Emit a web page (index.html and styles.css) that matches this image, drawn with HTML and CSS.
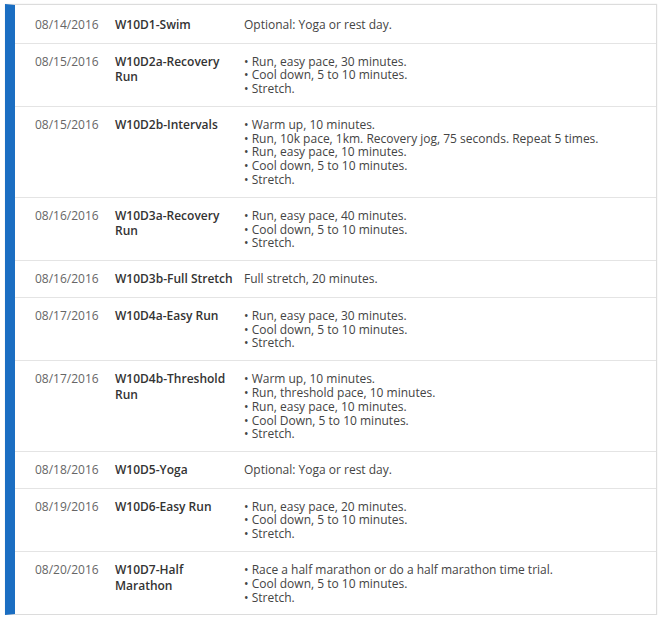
FILE: index.html
```html
<!DOCTYPE html>
<html>
<head>
<meta charset="utf-8">
<link rel="stylesheet" href="styles.css">
</head>
<body>
<div class="schedule">
  <div class="row">
    <div class="date">08/14/2016</div>
    <div class="name">W10D1-Swim</div>
    <div class="desc">Optional: Yoga or rest day.</div>
  </div>
  <div class="row">
    <div class="date">08/15/2016</div>
    <div class="name">W10D2a-Recovery Run</div>
    <div class="desc"><div>• Run, easy pace, 30 minutes.</div><div>• Cool down, 5 to 10 minutes.</div><div>• Stretch.</div></div>
  </div>
  <div class="row">
    <div class="date">08/15/2016</div>
    <div class="name">W10D2b-Intervals</div>
    <div class="desc"><div>• Warm up, 10 minutes.</div><div>• Run, 10k pace, 1km. Recovery jog, 75 seconds. Repeat 5 times.</div><div>• Run, easy pace, 10 minutes.</div><div>• Cool down, 5 to 10 minutes.</div><div>• Stretch.</div></div>
  </div>
  <div class="row">
    <div class="date">08/16/2016</div>
    <div class="name">W10D3a-Recovery Run</div>
    <div class="desc"><div>• Run, easy pace, 40 minutes.</div><div>• Cool down, 5 to 10 minutes.</div><div>• Stretch.</div></div>
  </div>
  <div class="row">
    <div class="date">08/16/2016</div>
    <div class="name nowrap">W10D3b-Full Stretch</div>
    <div class="desc">Full stretch, 20 minutes.</div>
  </div>
  <div class="row">
    <div class="date">08/17/2016</div>
    <div class="name">W10D4a-Easy Run</div>
    <div class="desc"><div>• Run, easy pace, 30 minutes.</div><div>• Cool down, 5 to 10 minutes.</div><div>• Stretch.</div></div>
  </div>
  <div class="row">
    <div class="date">08/17/2016</div>
    <div class="name">W10D4b-Threshold Run</div>
    <div class="desc"><div>• Warm up, 10 minutes.</div><div>• Run, threshold pace, 10 minutes.</div><div>• Run, easy pace, 10 minutes.</div><div>• Cool Down, 5 to 10 minutes.</div><div>• Stretch.</div></div>
  </div>
  <div class="row">
    <div class="date">08/18/2016</div>
    <div class="name">W10D5-Yoga</div>
    <div class="desc">Optional: Yoga or rest day.</div>
  </div>
  <div class="row">
    <div class="date">08/19/2016</div>
    <div class="name">W10D6-Easy Run</div>
    <div class="desc"><div>• Run, easy pace, 20 minutes.</div><div>• Cool down, 5 to 10 minutes.</div><div>• Stretch.</div></div>
  </div>
  <div class="row">
    <div class="date">08/20/2016</div>
    <div class="name">W10D7-Half Marathon</div>
    <div class="desc"><div>• Race a half marathon or do a half marathon time trial.</div><div>• Cool down, 5 to 10 minutes.</div><div>• Stretch.</div></div>
  </div>
</div>
</body>
</html>
```
FILE: styles.css
```css
html, body {
  margin: 0;
  padding: 0;
  background: #ffffff;
}
body {
  padding: 4px 6px 0 5px;
  font-family: "Open Sans", "Liberation Sans", sans-serif;
  font-size: 12px;
  line-height: 13.8px;
  color: #444;
}
.schedule {
  border: 1px solid #dcdcdc;
  border-left: 10px solid #1b6ec2;
  box-shadow: 0 0 1px rgba(0,0,0,0.15);
}
.row {
  display: grid;
  grid-template-columns: 80px 129px 1fr;
  align-items: start;
  padding: 11px 8px 10px 20px;
  border-top: 1px solid #e4e4e4;
}
.row:first-child {
  border-top: none;
  padding-top: 13px;
}
.date {
  color: #666;
}
.name {
  font-weight: 600;
  color: #333;
  line-height: 15.5px;
  margin-top: -1px;
  padding-right: 4px;
}
.nowrap {
  white-space: nowrap;
}
.desc {
  color: #444;
}
```
